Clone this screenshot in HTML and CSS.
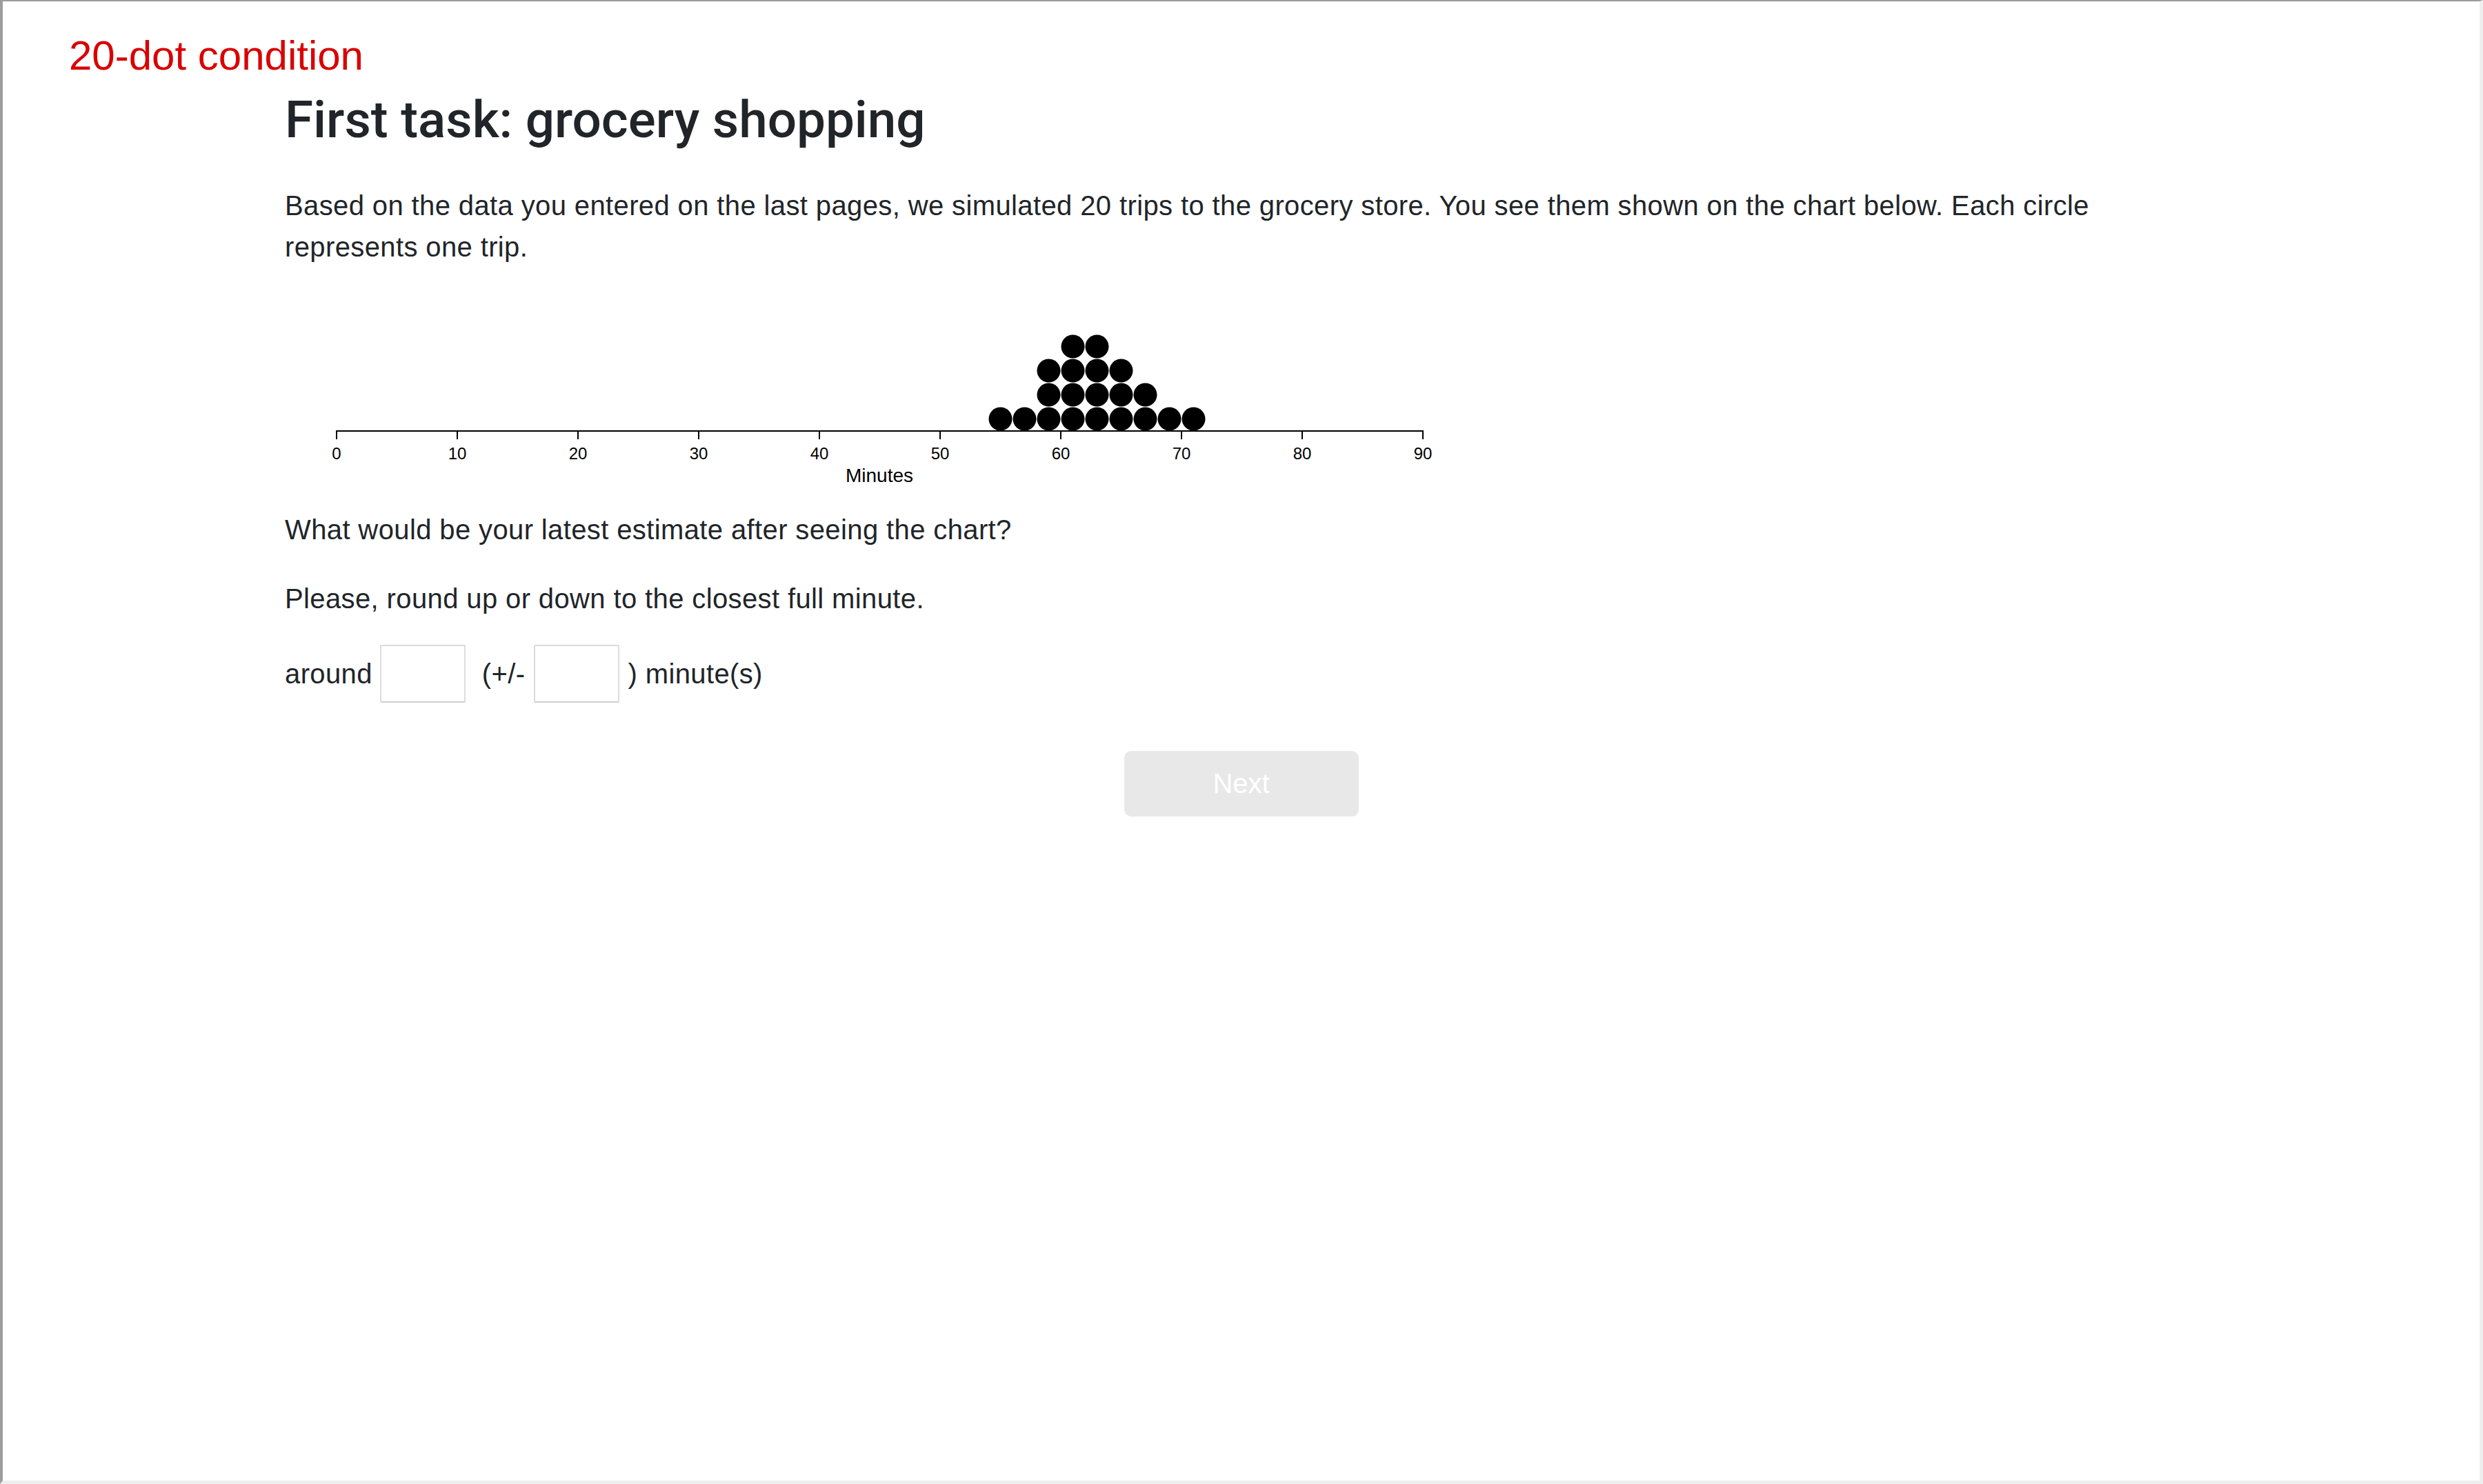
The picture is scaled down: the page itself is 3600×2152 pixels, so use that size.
FILE: index.html
```html
<!DOCTYPE html>
<html lang="en">
<head>
<meta charset="utf-8">
<title>First task: grocery shopping</title>
<link rel="stylesheet" href="styles.css">
</head>
<body>
<div class="page">
  <div class="condition">20-dot condition</div>
  <main class="content">
    <h1 class="title">First task: grocery shopping</h1>
    <p class="lead">Based on the data you entered on the last pages, we simulated 20 trips to the grocery store. You see them shown on the chart below. Each circle represents one trip.</p>
    <svg class="chart" width="1700" height="299" viewBox="0 0 1700 299" xmlns="http://www.w3.org/2000/svg">
      <g class="dots">
        <circle cx="1037.5" cy="188.5" r="17"/>
        <circle cx="1072.5" cy="188.5" r="17"/>
        <circle cx="1107.5" cy="188.5" r="17"/>
        <circle cx="1142.5" cy="188.5" r="17"/>
        <circle cx="1177.5" cy="188.5" r="17"/>
        <circle cx="1212.5" cy="188.5" r="17"/>
        <circle cx="1247.5" cy="188.5" r="17"/>
        <circle cx="1282.5" cy="188.5" r="17"/>
        <circle cx="1317.5" cy="188.5" r="17"/>
        <circle cx="1107.5" cy="153.5" r="17"/>
        <circle cx="1142.5" cy="153.5" r="17"/>
        <circle cx="1177.5" cy="153.5" r="17"/>
        <circle cx="1212.5" cy="153.5" r="17"/>
        <circle cx="1247.5" cy="153.5" r="17"/>
        <circle cx="1107.5" cy="118.5" r="17"/>
        <circle cx="1142.5" cy="118.5" r="17"/>
        <circle cx="1177.5" cy="118.5" r="17"/>
        <circle cx="1212.5" cy="118.5" r="17"/>
        <circle cx="1142.5" cy="83.5" r="17"/>
        <circle cx="1177.5" cy="83.5" r="17"/>
      </g>
      <g class="axis">
        <path class="domain" d="M75,218V206H1650V218"/>
        <line x1="250" y1="206" x2="250" y2="218"/>
        <line x1="425" y1="206" x2="425" y2="218"/>
        <line x1="600" y1="206" x2="600" y2="218"/>
        <line x1="775" y1="206" x2="775" y2="218"/>
        <line x1="950" y1="206" x2="950" y2="218"/>
        <line x1="1125" y1="206" x2="1125" y2="218"/>
        <line x1="1300" y1="206" x2="1300" y2="218"/>
        <line x1="1475" y1="206" x2="1475" y2="218"/>
        <text x="75" y="247">0</text>
        <text x="250" y="247">10</text>
        <text x="425" y="247">20</text>
        <text x="600" y="247">30</text>
        <text x="775" y="247">40</text>
        <text x="950" y="247">50</text>
        <text x="1125" y="247">60</text>
        <text x="1300" y="247">70</text>
        <text x="1475" y="247">80</text>
        <text x="1650" y="247">90</text>
        <text class="axis-label" x="862" y="280">Minutes</text>
      </g>
    </svg>
    <p class="question">What would be your latest estimate after seeing the chart?</p>
    <p class="question question-last">Please, round up or down to the closest full minute.</p>
    <div class="estimate">
      <span class="word">around</span>
      <input class="box box-first" type="text" aria-label="estimate">
      <span class="word word-pm">(+/-</span>
      <input class="box box-second" type="text" aria-label="range">
      <span class="word word-unit">) minute(s)</span>
    </div>
  </main>
  <div class="actions">
    <button class="next" type="button" disabled>Next</button>
  </div>
</div>
</body>
</html>
```

FILE: styles.css
```css
html, body {
  margin: 0;
  padding: 0;
  background: #ffffff;
}

body {
  font-family: "Liberation Sans", Arial, sans-serif;
  color: #212529;
}

.page {
  box-sizing: border-box;
  min-height: 2152px;
  border-top: 2px solid #9b9b9b;
  border-left: 4px solid #9d9d9d;
  border-right: 5px solid #efefef;
  border-bottom: 5px solid #eeeeee;
  background: #ffffff;
}

.condition {
  margin: 44px 0 0 96px;
  font-size: 60px;
  line-height: 70px;
  color: #d90000;
}

.content {
  display: block;
  margin-left: 409px;
  width: 2680px;
}

.title {
  margin: 14px 0 50px 0;
  font-family: "Roboto", "Liberation Sans", sans-serif;
  font-weight: 500;
  font-size: 74.6px;
  line-height: 88px;
  color: #212529;
}

.lead,
.question {
  margin: 0 0 40px 0;
  font-size: 40px;
  line-height: 60px;
  letter-spacing: 0.38px;
  color: #212529;
}

.lead {
  margin-bottom: 31px;
}

.question-last {
  margin-bottom: 37px;
}

.chart {
  display: block;
  margin: 0 0 20px 0;
}

.dots circle {
  fill: #000000;
}

.axis .domain,
.axis line {
  stroke: #000000;
  stroke-width: 2;
  fill: none;
}

.axis text {
  font-family: "Liberation Sans", Arial, sans-serif;
  font-size: 24px;
  text-anchor: middle;
  fill: #000000;
}

.axis .axis-label {
  font-size: 28px;
}

.estimate {
  display: flex;
  align-items: center;
  height: 84px;
}

.word {
  font-size: 40px;
  line-height: 60px;
  letter-spacing: 0.38px;
  color: #212529;
}

.box {
  box-sizing: border-box;
  width: 124px;
  height: 84px;
  margin: 0;
  padding: 0 8px;
  border: 2px solid #dcdcdc;
  border-bottom-color: #cfcfcf;
  border-radius: 2px;
  background: #ffffff;
  font-family: "Liberation Sans", Arial, sans-serif;
  font-size: 40px;
}

.box-first {
  margin-left: 11px;
}

.word-pm {
  margin-left: 24px;
}

.box-second {
  margin-left: 13px;
}

.word-unit {
  margin-left: 12px;
}

.actions {
  display: flex;
  justify-content: center;
  margin-top: 70px;
}

.next {
  box-sizing: border-box;
  width: 340px;
  height: 95px;
  padding: 0;
  border: none;
  border-radius: 10px;
  background: #e8e8e8;
  color: #ffffff;
  font-family: "Liberation Sans", Arial, sans-serif;
  font-size: 40px;
}
```
